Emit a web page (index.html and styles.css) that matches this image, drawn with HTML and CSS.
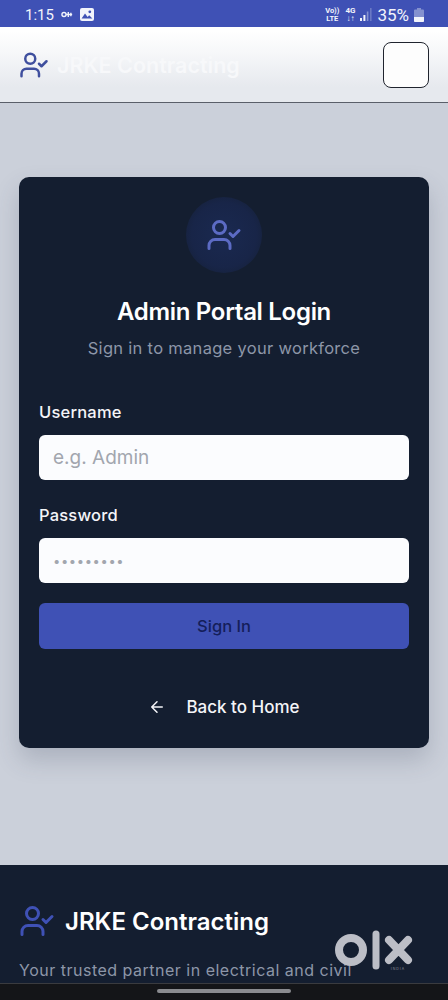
FILE: index.html

```html
<!DOCTYPE html>
<html lang="en">
<head>
<meta charset="utf-8"/>
<meta content="width=device-width, initial-scale=1.0" name="viewport"/>
<title>Admin Portal Login</title>
<link rel="stylesheet" href="styles.css">
</head>
<body>
<div class="status-bar">
  <div class="status-left">
    <span class="status-time">1:15</span>
    <svg class="status-key" viewBox="0 0 14 8" width="12" height="7"><circle cx="3.5" cy="4" r="2.4" fill="none" stroke="#f2f4fb" stroke-width="1.6"/><path d="M6 4h7M8.5 1v6M11.5 2v4" stroke="#f2f4fb" stroke-width="1.6" fill="none"/></svg>
    <svg class="status-pic" viewBox="0 0 14 13" width="14" height="13"><rect x="0" y="0" width="14" height="13" rx="2" fill="#f2f4fb"/><circle cx="9.8" cy="3.8" r="1.4" fill="#3f51b5"/><path d="M1.6 10.5l3.4-5 2.6 3.4 1.6-1.6 3.2 3.2z" fill="#3f51b5"/></svg>
  </div>
  <div class="status-right">
    <span class="status-tiny">Vo))<br>LTE</span>
    <span class="status-tiny status-4g">4G<br>↓↑</span>
    <svg viewBox="0 0 12 13" width="12" height="13"><rect x="0" y="10" width="2" height="3" fill="#f2f4fb"/><rect x="3.4" y="7" width="2" height="6" fill="#f2f4fb"/><rect x="6.8" y="3.5" width="1.6" height="9.5" fill="#8491cf"/><rect x="10" y="0" width="1.6" height="13" fill="#6a79c4"/></svg>
    <span class="status-battery-text">35%</span>
    <svg viewBox="0 0 10 14" width="10" height="14"><path d="M3 0h4v1.5h2a1 1 0 0 1 1 1V13a1 1 0 0 1-1 1H1a1 1 0 0 1-1-1V2.500a1 1 0 0 1 1-1h2z" fill="#8491cf"/><path d="M0 9h10v4a1 1 0 0 1-1 1H1a1 1 0 0 1-1-1z" fill="#f2f4fb"/></svg>
  </div>
</div>

<header class="site-header">
  <div class="brand">
    <svg class="brand-icon" viewBox="0 0 24 24" width="30" height="30"><path d="M16 21v-2a4 4 0 0 0-4-4H6a4 4 0 0 0-4 4v2"/><circle cx="9" cy="7" r="4"/><path d="M16 11l2 2 4-4"/></svg>
    <span class="brand-name">JRKE Contracting</span>
  </div>
  <button class="menu-button" aria-label="Menu"></button>
</header>

<main class="page">
  <section class="login-card">
    <div class="login-icon">
      <svg viewBox="0 0 24 24" width="36" height="36"><path d="M16 21v-2a4 4 0 0 0-4-4H6a4 4 0 0 0-4 4v2"/><circle cx="9" cy="7" r="4"/><path d="M16 11l2 2 4-4"/></svg>
    </div>
    <h1>Admin Portal Login</h1>
    <p class="login-sub">Sign in to manage your workforce</p>
    <form class="login-form">
      <label for="username">Username</label>
      <input id="username" type="text" placeholder="e.g. Admin"/>
      <label for="password">Password</label>
      <input id="password" type="password" placeholder="•••••••••"/>
      <button class="signin-button" type="button">Sign In</button>
    </form>
    <a class="back-link" href="#">
      <svg viewBox="0 0 24 24" width="18" height="18"><path d="M19 12H5M12 19l-7-7 7-7"/></svg>
      <span>Back to Home</span>
    </a>
  </section>
</main>

<footer class="site-footer">
  <div class="footer-brand">
    <svg class="footer-icon" viewBox="0 0 24 24" width="36" height="36"><path d="M16 21v-2a4 4 0 0 0-4-4H6a4 4 0 0 0-4 4v2"/><circle cx="9" cy="7" r="4"/><path d="M16 11l2 2 4-4"/></svg>
    <span>JRKE Contracting</span>
  </div>
  <p>Your trusted partner in electrical and civil</p>
</footer>

<!-- watermark + phone nav sit over the page -->
<svg class="olx-mark" viewBox="0 0 78 42" width="78" height="42">
  <circle cx="16" cy="20" r="12" fill="none" stroke="#bcbec6" stroke-width="8"/>
  <path d="M41 4v32" stroke="#bcbec6" stroke-width="7" stroke-linecap="round"/>
  <path d="M54 10l19 20M73 10l-19 20" stroke="#bcbec6" stroke-width="8" stroke-linecap="round"/>
  <text x="63" y="40" text-anchor="middle" font-size="3.500" letter-spacing="1" fill="#8d909a">INDIA</text>
</svg>
<div class="nav-bar"><div class="nav-pill"></div></div>
</body>
</html>
```

FILE: styles.css

```css
* {
  box-sizing: border-box;
}

html, body {
  margin: 0;
  height: 1000px;
  overflow: hidden;
}

body {
  position: relative;
  font-family: "Inter", "Noto Sans", sans-serif;
  background-color: #cbd0da;
  color: white;
}

/* phone status bar */
.status-bar {
  height: 27px;
  background-color: #3f51b5;
  color: #f2f4fb;
  display: flex;
  justify-content: space-between;
  align-items: center;
  padding: 2px 24px 0 25px;
}

.status-left, .status-right {
  display: flex;
  align-items: center;
}

.status-left {
  gap: 7px;
}

.status-right {
  gap: 5px;
}

.status-time {
  font-family: "Roboto", sans-serif;
  font-size: 15px;
}

.status-tiny {
  font-family: "Roboto", sans-serif;
  font-size: 7.500px;
  font-weight: 700;
  line-height: 8px;
  text-align: center;
}

.status-4g {
  font-size: 8px;
  margin-left: 1px;
}

.status-battery-text {
  font-family: "Roboto", sans-serif;
  font-size: 17px;
}

/* site header */
.site-header {
  height: 76px;
  display: flex;
  justify-content: space-between;
  align-items: center;
  padding: 0 19px;
  background: linear-gradient(#ffffff 5%, #f6f7f9 35%, #e6e9ee 80%);
  border-bottom: 1px solid #5a5f69;
}

.brand {
  display: flex;
  align-items: center;
  gap: 8px;
}

.brand-icon, .login-icon svg, .footer-icon {
  fill: none;
  stroke-width: 2;
  stroke-linecap: round;
  stroke-linejoin: round;
}

.brand-icon {
  stroke: #3f4f9e;
}

.brand-name {
  font-size: 21.500px;
  font-weight: 600;
  color: #f7f8fa;
}

.menu-button {
  width: 46px;
  height: 46px;
  background-color: #fdfdfd;
  border: 1px solid #20242e;
  border-radius: 8px;
  padding: 0;
}

/* login card */
.page {
  height: 762px;
  padding: 74px 19px 0;
}

.login-card {
  height: 571px;
  background-color: #141e30;
  border-radius: 10px;
  box-shadow: 0 12px 24px rgba(60, 70, 90, 0.22);
  padding: 20px 20px 0;
  display: flex;
  flex-direction: column;
  align-items: center;
}

.login-icon {
  width: 76px;
  height: 76px;
  border-radius: 50%;
  background: radial-gradient(circle, #1a2950 0%, #182548 60%, #141e30 100%);
  display: flex;
  align-items: center;
  justify-content: center;
  margin-bottom: 24px;
}

.login-icon svg {
  stroke: #5c6bc4;
}

h1 {
  font-size: 24px;
  font-weight: 600;
  letter-spacing: -0.3px;
  line-height: 30px;
  margin: 0 0 10px;
  color: #ffffff;
}

.login-sub {
  font-size: 16.500px;
  letter-spacing: 0.3px;
  line-height: 22px;
  margin: 0 0 42px;
  color: #8d96a8;
}

.login-form {
  width: 100%;
  display: flex;
  flex-direction: column;
}

label {
  font-size: 16.500px;
  font-weight: 500;
  letter-spacing: 0.2px;
  line-height: 22px;
  margin-bottom: 12px;
  color: #f4f5f8;
}

input {
  height: 45px;
  width: 100%;
  border: none;
  border-radius: 6px;
  background-color: #fbfcfe;
  padding: 0 14px;
  font-family: inherit;
  font-size: 19px;
  margin-bottom: 24px;
}

input::placeholder {
  color: #a2a6ae;
  opacity: 1;
}

#password {
  font-size: 13px;
  letter-spacing: 0.6px;
  margin-bottom: 20px;
}

.signin-button {
  height: 46px;
  border: none;
  border-radius: 6px;
  background-color: #3f51b5;
  color: #141e5a;
  font-family: inherit;
  font-size: 16.500px;
  font-weight: 500;
}

.back-link {
  display: flex;
  align-items: center;
  gap: 20px;
  margin-top: 47px;
  font-size: 17px;
  font-weight: 500;
  line-height: 22px;
  color: #f4f5f8;
  text-decoration: none;
}

.back-link svg {
  fill: none;
  stroke: #f4f5f8;
  stroke-width: 2;
  stroke-linecap: round;
  stroke-linejoin: round;
}

/* footer */
.site-footer {
  height: 135px;
  background-color: #141e30;
  padding: 38px 19px 0;
}

.footer-brand {
  display: flex;
  align-items: center;
  gap: 10px;
  font-size: 24px;
  font-weight: 600;
  color: #fff;
}

.footer-icon {
  stroke: #3f51b5;
}

.site-footer p {
  margin: 19px 0 0;
  font-size: 16px;
  letter-spacing: 0.5px;
  line-height: 24px;
  color: #8d96a8;
}

.olx-mark {
  position: absolute;
  left: 335px;
  top: 930px;
}

.nav-bar {
  position: absolute;
  left: 0;
  right: 0;
  bottom: 0;
  height: 17px;
  background-color: #141518;
  border-top: 1px solid #3a3b3f;
  display: flex;
  justify-content: center;
  padding-top: 5px;
}

.nav-pill {
  width: 134px;
  height: 4px;
  border-radius: 2px;
  background-color: #8a8b8f;
}
```
